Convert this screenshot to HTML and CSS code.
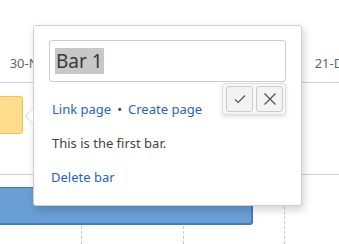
FILE: index.html
```html
<!DOCTYPE html>
<html>
<head>
<meta charset="utf-8">
<link rel="stylesheet" href="styles.css">
</head>
<body>
<div class="chart">
  <div class="header">
    <div class="hcol">30-Nov</div>
    <div class="hcol">7-Dec</div>
    <div class="hcol">14-Dec</div>
    <div class="hcol">21-Dec</div>
  </div>
  <div class="body">
    <div class="grid">
      <div class="gcol"></div>
      <div class="gcol"></div>
      <div class="gcol"></div>
      <div class="gcol"></div>
    </div>
    <div class="row row1"><div class="bar bar-yellow"></div></div>
    <div class="row row2"><div class="bar bar-blue"></div></div>
  </div>
</div>

<div class="popover">
  <div class="arrow"></div>
  <div class="input"><span class="sel">Bar 1</span></div>
  <div class="btn-group">
    <button class="btn" aria-label="Save">
      <svg width="14" height="14" viewBox="0 0 14 14"><path d="M2 7.5 L5.2 10.5 L12 3.5" fill="none" stroke="#555" stroke-width="1.2"/></svg>
    </button>
    <button class="btn" aria-label="Cancel">
      <svg width="14" height="14" viewBox="0 0 14 14"><path d="M1.5 1.5 L12.5 12.5 M12.5 1.5 L1.5 12.5" fill="none" stroke="#555" stroke-width="1.3"/></svg>
    </button>
  </div>
  <div class="links"><a href="#">Link page</a><span class="dot">•</span><a href="#">Create page</a></div>
  <p class="desc">This is the first bar.</p>
  <div class="del"><a href="#">Delete bar</a></div>
</div>
</body>
</html>
```

FILE: styles.css
```css
html, body {
  margin: 0;
  padding: 0;
}
body {
  width: 339px;
  height: 244px;
  overflow: hidden;
  position: relative;
  background: #fff;
  font-family: "Noto Sans", "Open Sans", sans-serif;
  color: #444;
}
.chart {
  width: 339px;
  height: 244px;
  overflow: hidden;
}
.header {
  display: flex;
  margin-left: -19.5px;
  box-sizing: border-box;
  height: 83px;
  border-bottom: 1px solid #d0d0d0;
}
.hcol {
  flex: 0 0 101.5px;
  text-align: center;
  font-size: 13px;
  color: #666;
  line-height: 20px;
  padding-top: 53px;
  white-space: nowrap;
}
.body {
  position: relative;
  height: 161px;
}
.grid {
  position: absolute;
  top: 0;
  left: -19.5px;
  bottom: 0;
  display: flex;
}
.gcol {
  flex: 0 0 100.5px;
  border-right: 1px dashed #c8c8c8;
}
.row {
  position: relative;
  box-sizing: border-box;
}
.row1 {
  height: 92px;
  border-bottom: 1px solid #d0d0d0;
  padding-top: 13px;
}
.row2 {
  height: 69px;
  padding-top: 12px;
}
.bar {
  height: 38px;
  box-sizing: border-box;
  border-radius: 3px;
}
.bar-yellow {
  width: 26px;
  margin-left: -3px;
  background: #fddc8c;
  border: 1px solid #f5c043;
}
.bar-blue {
  width: 256px;
  margin-left: -3px;
  background: #6a9fd5;
  border: 1px solid #3f7cc4;
  border-bottom-width: 2px;
  border-right-width: 2px;
}

.popover {
  position: absolute;
  left: 33px;
  top: 25px;
  width: 269px;
  height: 181px;
  box-sizing: border-box;
  background: #fff;
  border: 1px solid #cfcfcf;
  border-radius: 3px;
  box-shadow: 2px 4px 8px rgba(0,0,0,0.18);
  padding: 14px 15px 0 15px;
}
.arrow {
  position: absolute;
  left: -9px;
  top: 82px;
  width: 0;
  height: 0;
  border-top: 8px solid transparent;
  border-bottom: 8px solid transparent;
  border-right: 8px solid #d0d0d0;
}
.arrow::after {
  content: "";
  position: absolute;
  left: 1px;
  top: -7px;
  border-top: 7px solid transparent;
  border-bottom: 7px solid transparent;
  border-right: 7px solid #fff;
}
.input {
  height: 42px;
  box-sizing: border-box;
  border: 1px solid #cdcdcd;
  border-radius: 3px;
  padding: 7px 0 0 5px;
  font-size: 19px;
  line-height: 26px;
  color: #3a3a3a;
}
.sel {
  background: #c8c8c8;
  display: inline-block;
  padding: 0 1px;
}
.btn-group {
  position: absolute;
  left: 188px;
  top: 57px;
  width: 64px;
  height: 32px;
  box-sizing: border-box;
  background: #f7f7f7;
  border: 1px solid #dedede;
  border-radius: 3px;
  box-shadow: 0 2px 4px rgba(0,0,0,0.12);
  display: flex;
  gap: 3px;
  padding: 2px 2px 0 3px;
}
.btn {
  width: 27px;
  height: 26px;
  box-sizing: border-box;
  margin: 0;
  padding: 0;
  background: #f3f3f3;
  border: 1px solid #cbcbcb;
  border-radius: 3px;
  display: flex;
  align-items: center;
  justify-content: center;
}
.links {
  margin-top: 17px;
  font-size: 13px;
  line-height: 20px;
  padding-left: 3px;
}
a {
  color: #1f63c6;
  text-decoration: none;
}
.dot {
  color: #444;
  margin: 0 6px;
}
.desc {
  margin: 14px 0 0 3px;
  font-size: 13px;
  line-height: 20px;
  color: #444;
}
.del {
  margin: 14px 0 0 2px;
  font-size: 13px;
  line-height: 20px;
}
```
